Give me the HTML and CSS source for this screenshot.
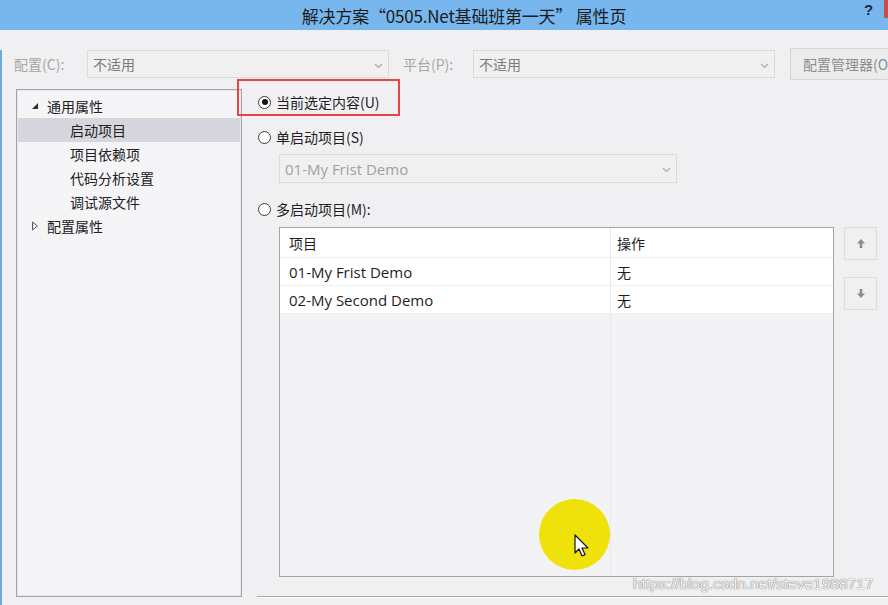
FILE: index.html
```html
<!DOCTYPE html>
<html lang="zh">
<head>
<meta charset="utf-8">
<title>属性页</title>
<link rel="stylesheet" href="styles.css">
</head>
<body>
<div class="titlebar">
  <div class="title">解决方案“0505.Net基础班第一天” 属性页</div>
  <div class="help">?</div>
  <div class="close"></div>
</div>
<div class="window">
  <div class="toolbar">
    <span class="lbl">配置(C):</span>
    <div class="combo dis"><span>不适用</span><svg class="chev" width="9" height="6" viewBox="0 0 9 6"><path d="M1 1 L4.5 4.5 L8 1" fill="none" stroke="#a8a8a8" stroke-width="1.2"/></svg></div>
    <span class="lbl lbl2">平台(P):</span>
    <div class="combo dis"><span>不适用</span><svg class="chev" width="9" height="6" viewBox="0 0 9 6"><path d="M1 1 L4.5 4.5 L8 1" fill="none" stroke="#a8a8a8" stroke-width="1.2"/></svg></div>
    <div class="btn">配置管理器(O)...</div>
  </div>
  <div class="main">
    <div class="tree">
      <div class="node"><svg class="tw" width="8" height="8" viewBox="0 0 8 8"><path d="M7 1 L7 7 L1 7 Z" fill="#333"/></svg><span>通用属性</span></div>
      <div class="node child sel"><span>启动项目</span></div>
      <div class="node child"><span>项目依赖项</span></div>
      <div class="node child"><span>代码分析设置</span></div>
      <div class="node child"><span>调试源文件</span></div>
      <div class="node"><svg class="tw" width="8" height="10" viewBox="0 0 8 10"><path d="M1.5 1 L6.5 5 L1.5 9 Z" fill="none" stroke="#555" stroke-width="1"/></svg><span>配置属性</span></div>
    </div>
    <div class="content">
      <div class="radio r1"><span class="dot on"></span><span>当前选定内容(U)</span></div>
      <div class="radio r2"><span class="dot"></span><span>单启动项目(S)</span></div>
      <div class="combo single dis"><span class="lat">01-My Frist Demo</span><svg class="chev" width="9" height="6" viewBox="0 0 9 6"><path d="M1 1 L4.5 4.5 L8 1" fill="none" stroke="#b0b0b0" stroke-width="1.2"/></svg></div>
      <div class="radio r3"><span class="dot"></span><span>多启动项目(M):</span></div>
      <div class="tablerow">
        <div class="grid">
          <div class="gr head"><div class="c1">项目</div><div class="c2">操作</div></div>
          <div class="gr"><div class="c1 lat">01-My Frist Demo</div><div class="c2">无</div></div>
          <div class="gr"><div class="c1 lat">02-My Second Demo</div><div class="c2">无</div></div>
          <div class="gr empty"><div class="c1"></div><div class="c2"></div></div>
        </div>
        <div class="side">
          <div class="sbtn"><svg width="10" height="11" viewBox="0 0 10 11"><path d="M5 1 L9 5.5 L6.3 5.5 L6.3 10 L3.7 10 L3.7 5.5 L1 5.5 Z" fill="#8c8c8c"/></svg></div>
          <div class="sbtn"><svg width="10" height="11" viewBox="0 0 10 11"><path d="M5 10 L9 5.5 L6.3 5.5 L6.3 1 L3.7 1 L3.7 5.5 L1 5.5 Z" fill="#8c8c8c"/></svg></div>
        </div>
      </div>
      <div class="sep"></div>
    </div>
  </div>
</div>
<div class="redbox"></div>
<div class="spot"></div>
<svg class="cursor" width="16" height="24" viewBox="0 0 16 24"><path d="M1 1 L1 19 L5 15 L8 22 L11 20.6 L8 14 L14 14 Z" fill="#fff" stroke="#111" stroke-width="1.2" stroke-linejoin="round"/></svg>
<div class="wm">https://blog.csdn.net/steve1988717</div>
</body>
</html>
```
FILE: styles.css
```css
* { box-sizing: border-box; }
html, body { margin: 0; padding: 0; }
body {
  width: 888px; height: 605px; overflow: hidden; position: relative;
  background: #f0f0f2;
  font-family: "Noto Sans CJK SC", "Noto Sans", sans-serif;
  font-size: 14px; color: #1e1e1e;
}
.titlebar {
  height: 30px; background: #78b7ee; position: relative;
  display: flex; align-items: center; justify-content: center;
}
.title { font-size: 17px; color: #1b1b1b; margin-left: 40px; letter-spacing: -0.2px; }
.help { position: absolute; left: 864px; top: 1px; font-family: "Liberation Sans", sans-serif; font-weight: bold; font-size: 15px; color: #1a2a40; }
.close { position: absolute; left: 884px; top: 0; width: 4px; height: 18px; background: #d04a4a; }
.window { height: 575px; border-left: 2px solid #6fa9e2; }
.toolbar { display: flex; align-items: center; height: 28px; margin-top: 20px; padding-left: 12px; }
.toolbar > * { flex: none; }
.lbl { color: #a6a6a6; width: 73px; font-size: 14px; }
.lbl2 { margin-left: 14px; width: 70px; }
.combo {
  position: relative; width: 302px; height: 28px; border: 1px solid #dadada; background: #f0f0f0;
  display: flex; align-items: center; padding-left: 5px; color: #7a7a7a; flex: none;
}
.combo .chev { position: absolute; right: 5px; top: 12px; }
.btn {
  margin-left: 15px; height: 32px; width: 120px; border: 1px solid #d4d4d4; background: #ececec;
  color: #8c8c8c; display: flex; align-items: center; padding-left: 12px; white-space: nowrap; overflow: hidden;
}
.main { display: flex; margin-top: 11px; }
.tree {
  margin-left: 14px; width: 226px; height: 508px; border: 1px solid #a3a3a3; background: #f5f5f7;
  padding-top: 4px; box-shadow: inset 0 0 0 1px #e6e6ea; flex: none;
}
.node { height: 24px; display: flex; align-items: center; padding-left: 13px; color: #202020; }
.node .tw { width: 10px; margin-right: 7px; }
.node.child { padding-left: 53px; }
.node.sel { background: #d6d6de; margin: 0 1px; padding-left: 52px; }
.content { margin-left: 15px; flex: 1; display: flex; flex-direction: column; }
.radio { display: flex; align-items: center; height: 24px; padding-left: 1px; color: #1e1e1e; }
.r1 { margin-top: 1px; }
.r2 { margin-top: 11px; }
.r3 { margin-top: 14px; }
.dot {
  width: 13px; height: 13px; border-radius: 50%; border: 1px solid #3a3a3a; background: #fff;
  margin-right: 5px; position: relative; flex: none;
}
.dot.on::after { content: ""; position: absolute; left: 2.5px; top: 2.5px; width: 6px; height: 6px; border-radius: 50%; background: #111; }
.combo.single { width: 398px; height: 29px; margin-left: 22px; margin-top: 5px; color: #a0a0a0; background: #f0f0f0; }
.lat { font-family: "Open Sans", "Noto Sans", sans-serif; font-size: 15px; }
.tablerow { display: flex; margin-top: 6px; margin-left: 22px; }
.grid { width: 555px; height: 350px; border: 1px solid #a5a5a5; background: #f3f3f5; display: flex; flex-direction: column; flex: none; }
.gr { display: flex; height: 28px; background: #fff; border-bottom: 1px solid #f0f0f0; }
.gr.head { height: 30px; }
.gr.empty { flex: 1; background: #f3f3f5; border-bottom: 0; }
.c1 { width: 331px; border-right: 1px solid #e8e8ea; padding-left: 9px; display: flex; align-items: center; color: #1e1e1e; }
.c2 { flex: 1; padding-left: 6px; display: flex; align-items: center; }
.side { margin-left: 10px; display: flex; flex-direction: column; gap: 17px; }
.sbtn { width: 33px; height: 33px; border: 1px solid #dcdcdc; background: #f0f0f2; display: flex; align-items: center; justify-content: center; }
.sep { margin-top: 19px; height: 2px; border-top: 1px solid #a8a8a8; border-bottom: 1px solid #ffffff; }
.redbox { position: absolute; left: 237px; top: 79px; width: 163px; height: 37px; border: 2px solid #e64545; }
.spot { position: absolute; left: 539px; top: 499px; width: 71px; height: 71px; border-radius: 50%; background: #efe20a; }
.cursor { position: absolute; left: 574px; top: 534px; }
.wm {
  position: absolute; left: 633px; top: 575px; font-family: "Liberation Sans", sans-serif; font-size: 15.5px;
  color: #f4f4f4; text-shadow: 0 0 1px #777, 0 0 1px #777;
}
```
